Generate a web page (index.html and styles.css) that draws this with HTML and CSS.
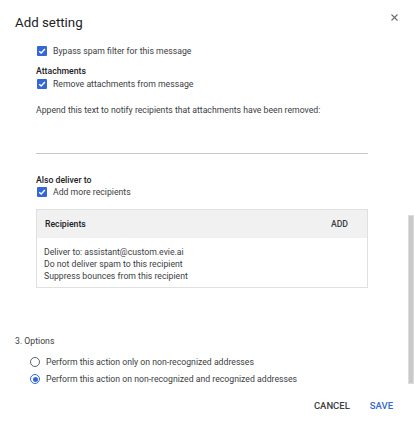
FILE: index.html
```html
<!DOCTYPE html>
<html lang="en">
<head>
<meta charset="UTF-8">
<meta name="viewport" content="width=device-width, initial-scale=1.0">
<title>Add setting</title>
<link rel="stylesheet" href="styles.css">
</head>
<body>
  <div class="dialog">
    <div class="header">
      <h1 class="title">Add setting</h1>
      <svg class="close" viewBox="0 0 7 7"><path d="M0.5 0.5 L6.5 6.5 M6.5 0.5 L0.5 6.5" /></svg>
    </div>
    <div class="scroll">
      <div class="content">
        <div class="check-row first">
          <span class="checkbox"><svg viewBox="0 0 10 10"><path d="M2.2 5.2 L4.2 7.1 L7.9 3.1" /></svg></span>
          <span>Bypass spam filter for this message</span>
        </div>
        <div class="group-label">Attachments</div>
        <div class="check-row second">
          <span class="checkbox"><svg viewBox="0 0 10 10"><path d="M2.2 5.2 L4.2 7.1 L7.9 3.1" /></svg></span>
          <span>Remove attachments from message</span>
        </div>
        <div class="append">Append this text to notify recipients that attachments have been removed:</div>
        <div class="textline"></div>
        <div class="group-label deliver">Also deliver to</div>
        <div class="check-row">
          <span class="checkbox"><svg viewBox="0 0 10 10"><path d="M2.2 5.2 L4.2 7.1 L7.9 3.1" /></svg></span>
          <span>Add more recipients</span>
        </div>
        <div class="recipients">
          <div class="rec-head">
            <span class="rec-title">Recipients</span>
            <span class="rec-add">ADD</span>
          </div>
          <div class="rec-body">
            <div>Deliver to: assistant@custom.evie.ai</div>
            <div>Do not deliver spam to this recipient</div>
            <div>Suppress bounces from this recipient</div>
          </div>
        </div>
        <div class="options">3. Options</div>
        <div class="radio-row top">
          <span class="radio"></span>
          <span>Perform this action only on non-recognized addresses</span>
        </div>
        <div class="radio-row">
          <span class="radio on"></span>
          <span>Perform this action on non-recognized and recognized addresses</span>
        </div>
      </div>
      <div class="track"><div class="thumb"></div></div>
    </div>
    <div class="footer">
      <span class="btn">CANCEL</span>
      <span class="btn save">SAVE</span>
    </div>
  </div>
</body>
</html>
```

FILE: styles.css
```css
body {
  margin: 0;
  background: #fff;
  font-family: Roboto, "Noto Sans", Arial, sans-serif;
  color: #202124;
  font-size: 8.7px;
}

.dialog {
  width: 414px;
  height: 424px;
  display: flex;
  flex-direction: column;
  overflow: hidden;
}

.header {
  display: flex;
  justify-content: space-between;
  align-items: flex-start;
  padding: 13px 16px 0 15px;
  height: 27px;
  flex: none;
}

.title {
  margin: 0;
  font-size: 13.3px;
  font-weight: 400;
  color: #202124;
  line-height: 20px;
}

.close {
  width: 7px;
  height: 7px;
  margin-top: 1px;
  fill: none;
  stroke: #6d6d6d;
  stroke-width: 1.1;
}

.scroll {
  height: 344px;
  display: flex;
  flex: none;
  overflow: hidden;
}

.content {
  flex: 1;
  padding-left: 15px;
}

.check-row {
  display: flex;
  align-items: center;
  height: 12px;
  padding-left: 22px;
  color: #3c4043;
}

.check-row.first {
  margin-top: 5px;
}

.check-row.second {
  margin-top: 1px;
}

.checkbox {
  width: 10px;
  height: 10px;
  border-radius: 1px;
  background: #3367d6;
  margin-right: 6px;
  display: flex;
  flex: none;
}

.checkbox svg {
  width: 10px;
  height: 10px;
  fill: none;
  stroke: #fff;
  stroke-width: 1.4;
}

.group-label {
  font-weight: 500;
  color: #202124;
  padding-left: 21px;
  margin-top: 8px;
  height: 12px;
  line-height: 12px;
}

.append {
  padding-left: 21px;
  margin-top: 14px;
  color: #3c4043;
  line-height: 12px;
}

.textline {
  margin-left: 21px;
  width: 332px;
  height: 0;
  border-top: 1px solid #c8c8c8;
  margin-top: 37px;
}

.group-label.deliver {
  margin-top: 20px;
}

.recipients {
  margin-left: 21px;
  width: 330px;
  border: 1px solid #e0e0e0;
  margin-top: 11px;
}

.rec-head {
  background: #f1f1f1;
  height: 28px;
  display: flex;
  align-items: center;
  justify-content: space-between;
  padding: 0 19px 0 8px;
}

.rec-title {
  font-weight: 500;
  color: #202124;
}

.rec-add {
  font-weight: 500;
  color: #3c4043;
}

.rec-body {
  padding: 8px 7px 5px 7px;
  line-height: 12px;
  color: #3c4043;
}

.options {
  margin-top: 47px;
  color: #3c4043;
  line-height: 12px;
}

.radio-row {
  display: flex;
  align-items: center;
  padding-left: 15px;
  height: 14px;
  color: #3c4043;
  margin-top: 3px;
}

.radio-row.top {
  margin-top: 8px;
}

.radio {
  width: 10px;
  height: 10px;
  border: 1px solid #5f6368;
  border-radius: 50%;
  margin-right: 6px;
  box-sizing: border-box;
  display: flex;
  align-items: center;
  justify-content: center;
  flex: none;
}

.radio.on {
  border-color: #3367d6;
}

.radio.on::after {
  content: "";
  width: 5px;
  height: 5px;
  border-radius: 50%;
  background: #3367d6;
}

.track {
  width: 6px;
  display: flex;
  flex-direction: column;
  justify-content: flex-end;
}

.thumb {
  height: 169px;
  background: #c9c9c9;
  border: 1px solid #dcdcdc;
  box-sizing: border-box;
}

.footer {
  height: 40px;
  flex: none;
  display: flex;
  justify-content: flex-end;
  align-items: center;
  padding: 2px 21px 0 0;
  box-sizing: border-box;
  gap: 20px;
}

.btn {
  font-weight: 500;
  font-size: 9.5px;
  color: #3c4043;
}

.btn.save {
  color: #3367d6;
}
```
